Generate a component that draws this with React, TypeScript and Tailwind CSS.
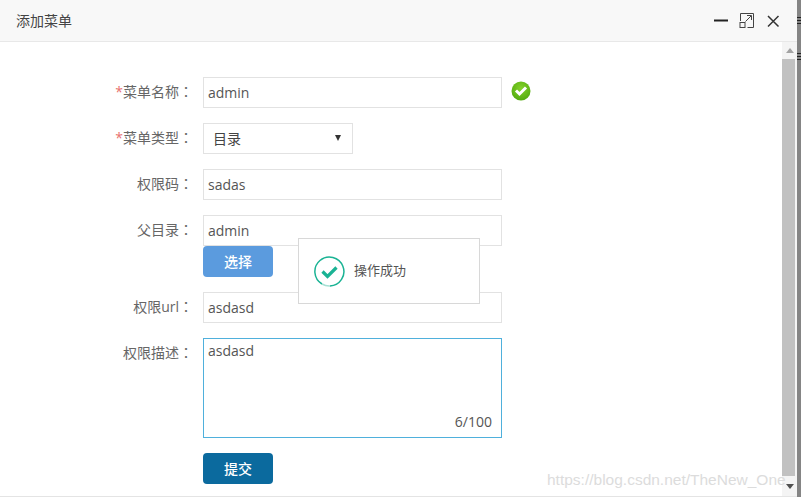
// Add menu dialog
const FONT = "font-['Open_Sans','Noto_Sans_CJK_SC',sans-serif]";

function Label({ text, required }: { text: string; required?: boolean }) {
  return (
    <label className="w-[193px] shrink-0 pt-[4px] text-right text-[14px] leading-5 text-[#666]">
      {required && <span className="text-[#e8706f]">*</span>}
      {text}
      <span className="font-['Noto_Sans_CJK_TC',sans-serif]">：</span>
    </label>
  );
}

function TextInput({ value }: { value: string }) {
  return (
    <div className="ml-[10px] h-[31px] w-[299px] border border-[#e2e2e2] bg-white pl-1 text-[14px] leading-[29px] text-[#555]">
      {value}
    </div>
  );
}

function Button({ text, color }: { text: string; color: string }) {
  return (
    <button className={`h-[31px] w-[70px] rounded-[4px] text-[14px] font-medium text-white ${color}`}>
      {text}
    </button>
  );
}

function WindowIcons() {
  return (
    <div className="flex items-center">
      <svg width="15" height="15" viewBox="0 0 15 15">
        <path d="M0 7.5h14" stroke="#222" strokeWidth="2" />
      </svg>
      <svg className="ml-[10px]" width="15" height="15" viewBox="0 0 15 15" fill="none" stroke="#444" strokeWidth="1">
        <path d="M1.5 8V0.5h13v14h-6" />
        <rect x="1" y="9.5" width="5" height="5" />
        <path d="M6.5 8.5L12 3M8 2.5h4.5V7" />
      </svg>
      <svg className="ml-[12px]" width="14" height="14" viewBox="0 0 14 14">
        <path d="M2 2l10.5 10.5M12.5 2L2 12.5" stroke="#333" strokeWidth="1.5" />
      </svg>
    </div>
  );
}

function Scrollbar() {
  return (
    <div className="flex w-[15px] shrink-0 flex-col bg-[#f4f4f4]">
      <div className="flex h-[17px] shrink-0 items-center justify-center">
        <div className="h-0 w-0 border-x-[4px] border-b-[5px] border-x-transparent border-b-[#a3a3a3]" />
      </div>
      <div className="w-[13px] flex-1 bg-[#c1c1c1]" />
      <div className="flex h-[20px] shrink-0 items-center justify-center">
        <div className="h-0 w-0 border-x-[4px] border-t-[5px] border-x-transparent border-t-[#505050]" />
      </div>
    </div>
  );
}

export default function App() {
  return (
    <div className={`flex h-[497px] w-[801px] overflow-hidden bg-white ${FONT}`}>
      <div className="flex w-[797px] flex-col border-b border-[#e4e4e4]">
        {/* Title bar */}
        <header className="flex h-[42px] shrink-0 items-center justify-between border-b border-[#e8e8e8] bg-[#f8f8f8] pl-4 pr-[17px]">
          <span className="text-[14px] text-[#444]">添加菜单</span>
          <WindowIcons />
        </header>

        <div className="relative flex min-h-0 flex-1">
          <div className="flex-1 pt-[35px]">
            <div className="flex">
              <Label text="菜单名称" required />
              <TextInput value="admin" />
              <svg className="ml-[9px] mt-[4px]" width="20" height="20" viewBox="0 0 20 20">
                <defs>
                  <radialGradient id="okGreen" cx="50%" cy="35%" r="70%">
                    <stop offset="0%" stopColor="#84d22a" />
                    <stop offset="100%" stopColor="#4fa80c" />
                  </radialGradient>
                </defs>
                <circle cx="10" cy="10" r="9.5" fill="url(#okGreen)" />
                <path d="M5 9.5l3.5 3.5L15 6.5" fill="none" stroke="#fff" strokeWidth="3" />
              </svg>
            </div>

            <div className="mt-[15px] flex">
              <Label text="菜单类型" required />
              <div className="ml-[10px] flex h-[31px] w-[150px] items-center justify-between border border-[#e2e2e2] pl-[9px] pr-[11px] text-[14px] text-[#444]">
                <span>目录</span>
                <div className="mb-[1px] h-0 w-0 border-x-[3px] border-t-[6px] border-x-transparent border-t-[#333]" />
              </div>
            </div>

            <div className="mt-[15px] flex">
              <Label text="权限码" />
              <TextInput value="sadas" />
            </div>

            <div className="mt-[15px] flex">
              <Label text="父目录" />
              <div>
                <TextInput value="admin" />
                <div className="ml-[10px]">
                  <Button text="选择" color="bg-[#5b9bde]" />
                </div>
              </div>
            </div>

            <div className="mt-[15px] flex">
              <Label text="权限url" />
              <TextInput value="asdasd" />
            </div>

            <div className="mt-[15px] flex">
              <Label text="权限描述" />
              <div className="relative ml-[10px] h-[100px] w-[299px] border border-[#4fb0dc] pl-1 pt-[2px] text-[14px] leading-5 text-[#555]">
                asdasd
                <span className="absolute bottom-[5px] right-[9px] text-[#555]">6/100</span>
              </div>
            </div>

            <div className="ml-[203px] mt-[15px]">
              <Button text="提交" color="bg-[#0b6a9e]" />
            </div>
          </div>

          <Scrollbar />

          {/* Toast */}
          <div className="absolute left-[298px] top-[196px] flex h-[66px] w-[182px] items-center border border-[#d8d8d8] bg-white pl-[15px]">
            <svg width="31" height="31" viewBox="0 0 31 31" fill="none">
              <path d="M8 28A14.5 14.5 0 1 1 16 30" stroke="#1ab394" strokeWidth="1.5" />
              <path d="M16 30A14.5 14.5 0 0 1 8 28" stroke="#a6e0d4" strokeWidth="1.5" />
              <path d="M8.5 15.5l5 5 9-9" stroke="#1ab394" strokeWidth="3.2" />
            </svg>
            <span className="ml-[9px] text-[13px] text-[#555]">操作成功</span>
          </div>

          {/* Blog watermark */}
          <span className="absolute left-[547px] top-[428px] font-['Liberation_Sans',sans-serif] text-[15.5px] leading-5 text-[#dcdcdc]">
            https://blog.csdn.net/TheNew_One
          </span>
        </div>
      </div>

      {/* Edge of the page behind the dialog */}
      <div className="flex w-1 flex-col bg-[#858585]">
        <div className="mt-[17px] h-[9px] bg-[repeating-linear-gradient(to_bottom,#222_0,#222_1px,#858585_1px,#858585_3px)]" />
        <div className="mt-[27px] h-[9px] bg-[repeating-linear-gradient(to_bottom,#222_0,#222_1px,#858585_1px,#858585_3px)]" />
      </div>
    </div>
  );
}
